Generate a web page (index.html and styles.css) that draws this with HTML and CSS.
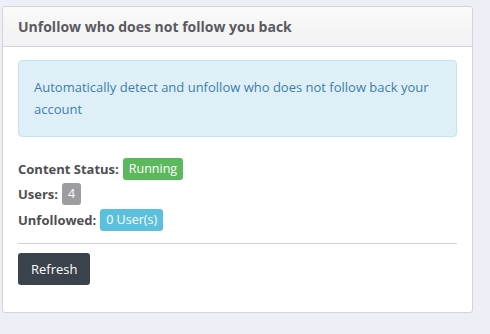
FILE: index.html
```html
<!DOCTYPE html>
<html lang="en">
<head>
<meta charset="UTF-8" />
<title>Unfollow</title>
<link rel="stylesheet" href="styles.css">
</head>
<body>

<div class="panel">
  <div class="panel-heading">Unfollow who does not follow you back</div>
  <div class="panel-body">
    <div class="alert">Automatically detect and unfollow who does not follow back your account</div>
    <div class="status">
      <div class="status-row"><b>Content Status:</b> <span class="badge green">Running</span></div>
      <div class="status-row"><b>Users:</b> <span class="badge grey">4</span></div>
      <div class="status-row"><b>Unfollowed:</b> <span class="badge blue">0 User(s)</span></div>
    </div>
    <hr>
    <button class="btn">Refresh</button>
  </div>
</div>

</body>
</html>
```

FILE: styles.css
```css
body {
  margin: 0;
  padding: 6px 2px;
  background: #eeeef6;
  font-family: "Open Sans", "Liberation Sans", sans-serif;
  font-size: 13px;
  color: #555;
}
.panel {
  width: 469px;
  background: #fff;
  border: 1px solid #d4d4d8;
  border-radius: 3px;
}
.panel-heading {
  height: 39px;
  line-height: 39px;
  padding: 0 15px;
  font-size: 14px;
  font-weight: bold;
  color: #5a5a60;
  background: linear-gradient(#fafafa, #f2f1f3);
  border-bottom: 1px solid #d4d4d8;
  border-radius: 3px 3px 0 0;
}
.panel-body {
  padding: 13px 15px 27px;
}
.alert {
  background: #dfeff7;
  border: 1px solid #bde5f2;
  border-radius: 4px;
  padding: 15px 15px 16px;
  line-height: 22px;
  color: #3a7fa8;
}
.status {
  margin-top: 19px;
}
.status-row {
  height: 25.5px;
  display: flex;
  align-items: center;
  gap: 4px;
  color: #555;
}
.status-row b {
  color: #4e4e52;
}
.badge {
  display: inline-block;
  padding: 0 6px;
  height: 22px;
  line-height: 22px;
  border-radius: 3px;
  color: #fff;
  font-size: 12.5px;
}
.green { background: #5cb85c; }
.grey { background: #9d9d9f; }
.blue { background: #5bc0de; }
hr {
  border: 0;
  border-top: 1px solid #cfcfd2;
  margin: 10px 0 9px;
}
.btn {
  font-family: inherit;
  font-size: 13px;
  color: #fff;
  background: #3a424b;
  border: none;
  border-radius: 3px;
  height: 32px;
  padding: 0 13px;
}
```
